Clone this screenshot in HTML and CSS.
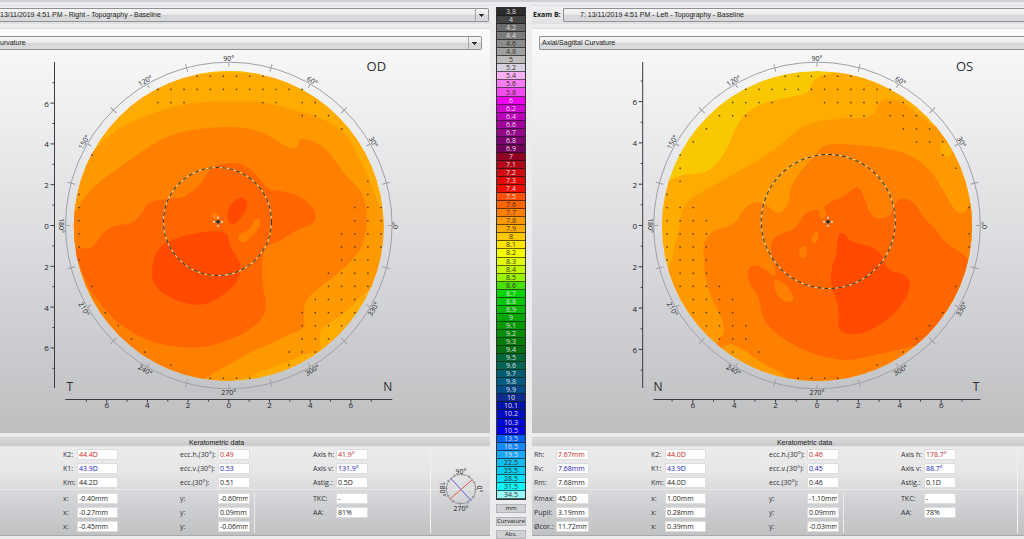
FILE: index.html
```
<!DOCTYPE html>
<html lang="en">
<head>
<meta charset="utf-8">
<title>Topography comparison</title>
<link rel="stylesheet" href="styles.css">
</head>
<body>
<main class="app">
  <section class="eye eye-right">
    <div class="exam"><select class="combo" aria-label="Exam A"><option>13/11/2019 4:51 PM - Right - Topography - Baseline</option></select></div>
    <div class="map">
      <div class="map-head"><select class="combo" aria-label="Map type, right eye"><option>urvature</option></select></div>
      <svg class="chart" id="chart-od" viewBox="0 50 490 383" role="img" aria-label="OD curvature map"></svg>
    </div>
    <div class="kerato">
      <h2 class="kerato-title">Keratometric data</h2>
      <div class="kerato-body" id="data-od"></div>
    </div>
  </section>
  <aside class="scale">
    <ol class="steps" id="steps"></ol>
    <button class="unit">mm</button>
    <button class="unit">Curvature</button>
    <button class="unit">Abs.</button>
  </aside>
  <section class="eye eye-left">
    <div class="exam"><label class="exam-label" for="exam-b">Exam B:</label><select class="combo combo-open combo-indent" id="exam-b"><option>7: 13/11/2019 4:51 PM - Left - Topography - Baseline</option></select></div>
    <div class="map">
      <div class="map-head"><select class="combo combo-open" aria-label="Map type, left eye"><option>Axial/Sagittal Curvature</option></select></div>
      <svg class="chart" id="chart-os" viewBox="532 50 492 383" role="img" aria-label="OS curvature map"></svg>
    </div>
    <div class="kerato">
      <h2 class="kerato-title">Keratometric data</h2>
      <div class="kerato-body" id="data-os"></div>
    </div>
  </section>
</main>
<script src="app.js"></script>
</body>
</html>
```
FILE: styles.css
```
* { box-sizing: border-box; }
body {
  margin: 0;
  background: #ececee;
  color: #1c1c20;
  font: 7px/10px "Open Sans", "Noto Sans", sans-serif;
  overflow: hidden;
}
.app {
  display: grid;
  grid-template-columns: minmax(0, 1fr) 40px minmax(0, 1fr);
  border-top: 2px solid #d0d0d7;
}
.eye { display: flex; flex-direction: column; gap: 4px; padding-top: 3px; min-width: 0; }
.exam {
  display: flex;
  align-items: center;
  height: 19px;
  border-top: 1px solid #dedee1;
  background: linear-gradient(#f1f1f2, #e0e0e2);
}
.eye-right { margin-right: 2px; }
.eye-right .exam { padding-right: 1px; }
.exam-label { flex: none; width: 31px; padding-left: 1px; font-weight: bold; white-space: nowrap; }
.combo {
  flex: 1;
  width: 100%;
  min-width: 0;
  height: 14px;
  margin: 0;
  padding: 0 14px 0 0;
  appearance: none;
  border: 1px solid #909195;
  border-left: 0;
  border-radius: 0 2px 2px 0;
  color: #1c1c20;
  font: 7px/10px "Liberation Sans", Arial, sans-serif;
  background:
    linear-gradient(#333, #333) right 4px top 5px / 5px 1px no-repeat,
    linear-gradient(#333, #333) right 5px top 6px / 3px 1px no-repeat,
    linear-gradient(#333, #333) right 6px top 7px / 1px 1px no-repeat,
    linear-gradient(#a5a6aa, #a5a6aa) right 12px top 0 / 1px 100% no-repeat,
    linear-gradient(#f4f4f4 0, #ebebec 45%, #d5d6d8 50%, #d9dadc 100%);
}
.combo-open {
  padding: 0 0 0 2px;
  border: 1px solid #909195;
  border-right: 0;
  border-radius: 2px 0 0 2px;
  background: linear-gradient(#f4f4f4 0, #ebebec 45%, #d5d6d8 50%, #d9dadc 100%);
}
.combo-indent { padding-left: 16px; }
.map {
  border-top: 1px solid #dcdcdf;
  background: linear-gradient(#fafafa 0, #f2f2f3 15%, #dedfe1 48%, #cdced2 75%, #c5c6c8 88%, #bdbfc1 100%);
}
.map-head { display: flex; padding-top: 7px; }
.eye-right .map-head { padding-right: 8px; }
.eye-left .map-head { padding-left: 7px; }
.chart { display: block; width: 100%; height: auto; }
.kerato {
  height: 99px;
  border-top: 1px solid #cfcfd2;
  border-bottom: 1px solid #a9aaac;
  background: linear-gradient(#dcdcde 0, #c9cacc 7px, #ececec 9px, #e6e6e7 35px, #d0d1d4 65px, #c0c1c3 100%);
}
.kerato-title { margin: 0; height: 11px; font: 7px/10px "Liberation Sans", Arial, sans-serif; text-align: center; }
.eye-right .kerato-title { padding-right: 57px; }
.eye-left .kerato-title { padding-left: 53px; }
.kerato-body { display: flex; background: linear-gradient(#e8e8ea, #e8e8ea) 0 40px / 100% 1px no-repeat; }
.eye-right .kerato-body { padding-left: 63px; }
.eye-left .kerato-body { padding-left: 2px; }
.groups { flex: 1; display: grid; }
.eye-right .groups { grid-template-columns: 117fr 133fr 117fr; }
.eye-left .groups { grid-template-columns: 117fr 118fr 132fr 116fr; }
.group { display: grid; grid-template-rows: 11px 11px 13px 11px 11px 11px; row-gap: 3px; align-content: start; }
.field { display: flex; align-items: center; height: 11px; }
.field label { flex: none; white-space: nowrap; color: #303036; }
.field input {
  min-width: 0;
  height: 11px;
  padding: 0 1px;
  border: 1px solid #dddde0;
  border-radius: 1px;
  background: #fff;
  color: #1c1c20;
  font: inherit;
}
.field .red { color: #c8241c; }
.field .blue { color: #2020c0; }
.g-r label { width: 22px; }
.g-r input { width: 33px; }
.g-k label { width: 14px; }
.g-k input { width: 41px; }
.g-e label { width: 38px; }
.g-e input { width: 32px; }
.g-e { background: linear-gradient(#ececee, #ececee) 74px 44px / 1px 40px no-repeat; }
.g-a label { width: 23px; }
.g-a input { width: 32px; }
.compass { flex: none; width: 60px; height: 84px; border-left: 1px solid #f2f2f2; }
.rest { flex: none; width: 7px; height: 84px; border-left: 1px solid #f2f2f2; }
.scale { display: flex; flex-direction: column; gap: 4px; padding: 5px 6px 0 4px; }
.steps {
  display: grid;
  grid-auto-rows: 1fr;
  height: 493px;
  margin: 0;
  padding: 0;
  list-style: none;
  border: 1px solid #333;
}
.steps li { display: flex; align-items: center; justify-content: center; min-height: 0; line-height: 7px; border-bottom: 1px solid rgba(20, 20, 20, .65); overflow: hidden; }
.unit {
  height: 9px;
  margin: 0;
  padding: 0;
  border: 1px solid #b4b5b8;
  background: #cfd0d2;
  color: #1c1c20;
  font: 6px/7px "Open Sans", "Noto Sans", sans-serif;
}
```
FILE: app.js
```
// Curvature scale
var steps = [
  ['3.8', '#2b2b2b', 1], ['4', '#444', 1], ['4.2', '#6b6b6b', 1], ['4.4', '#7b7b7b', 1], ['4.6', '#8b8b8b'], ['4.8', '#a0a0a0'],
  ['5', '#bcbcbc'], ['5.2', '#d8d0e0'], ['5.4', '#f8b0f4'], ['5.6', '#f57cf2'], ['5.8', '#f24cf0'], ['6', '#f000f0', 1],
  ['6.2', '#d000d0', 1], ['6.4', '#b800b8', 1], ['6.6', '#a0009c', 1], ['6.7', '#900a88', 1], ['6.8', '#7c0470', 1], ['6.9', '#700058', 1],
  ['7', '#900020', 1], ['7.1', '#b00818', 1], ['7.2', '#cc0c10', 1], ['7.3', '#e00808', 1], ['7.4', '#f00c00', 1], ['7.5', '#ff5000', 1],
  ['7.6', '#ff6600'], ['7.7', '#ff8000'], ['7.8', '#ff9900'], ['7.9', '#ffab00'], ['8', '#ffc800'], ['8.1', '#ffe600'],
  ['8.2', '#f4fc00'], ['8.3', '#e0fc10'], ['8.4', '#c4f800'], ['8.5', '#98f400'], ['8.6', '#48e000'], ['8.7', '#00d400', 1],
  ['8.8', '#00c800', 1], ['8.9', '#00b800', 1], ['9', '#00a800', 1], ['9.1', '#009a00', 1], ['9.2', '#008c08', 1], ['9.3', '#007c08', 1],
  ['9.4', '#007010', 1], ['9.5', '#006838', 1], ['9.6', '#006450', 1], ['9.7', '#005c70', 1], ['9.8', '#005c80', 1], ['9.9', '#004c88', 1],
  ['10', '#0c2c90', 1], ['10.1', '#0014a8', 1], ['10.2', '#000cc0', 1], ['10.3', '#0008d8', 1], ['10.5', '#0000e8', 1], ['13.5', '#0060f8', 1],
  ['16.5', '#1488fc', 1], ['19.5', '#18a8fc', 1], ['22.5', '#10bcf0'], ['25.5', '#08ccf4'], ['28.5', '#08e0f8'], ['31.5', '#10f4fc'], ['34.5', '#98f8f8']
];
document.getElementById('steps').innerHTML = steps.map(function (s) {
  return '<li style="background:' + s[1] + ';color:' + (s[2] ? '#e4dce0' : '#3a3020') + '">' + s[0] + '</li>';
}).join('');

// Closed smooth curve through the midpoints of a point list
function blob(text) {
  var p = text.split(' ').map(function (t) { return t.split(',').map(Number); });
  var mid = function (a, b) { return (a[0] + b[0]) / 2 + ' ' + (a[1] + b[1]) / 2; };
  var d = 'M' + mid(p[p.length - 1], p[0]);
  p.forEach(function (q, i) { d += 'Q' + q[0] + ' ' + q[1] + ' ' + mid(q, p[(i + 1) % p.length]); });
  return d + 'Z';
}

function chart(o) {
  var cx = o.cx, cy = 225.5, s = '', i, a, c, n;
  s += '<clipPath id="' + o.id + '-clip"><circle cx="' + cx + '" cy="226" r="155"/></clipPath><g clip-path="url(#' + o.id + '-clip)">';
  s += '<circle cx="' + cx + '" cy="226" r="155" fill="' + o.base + '"/>';
  o.layers.forEach(function (l) { s += '<path fill="' + l[0] + '" d="' + blob(l[1]) + '"/>'; });
  s += '</g><g fill="#3c3420">';
  o.dots.forEach(function (row, k) {
    row.forEach(function (r) {
      for (n = r[0]; n <= (r[1] === undefined ? r[0] : r[1]); n++) {
        s += '<rect width="1.4" height="1.4" x="' + (o.dx + n * 13.13 - .7) + '" y="' + (76.3 + k * 13.13 - .7) + '"/>';
      }
    });
  });
  s += '</g><g fill="none" stroke="#a0a1a8"><circle cx="' + cx + '" cy="' + cy + '" r="163.3"/>';
  for (i = 0; i < 24; i++) {
    s += '<path transform="rotate(' + i * 15 + ' ' + cx + ' ' + cy + ')" d="M' + (cx + 159) + ' ' + cy + 'h' + (i % 2 ? 8 : 4) + '"/>';
  }
  s += '</g><g fill="#222228" font-size="7" text-anchor="middle">';
  [[0, -90], [30, 60], [60, 30], [90, 0], [120, -30], [150, -60], [180, 90], [210, 60], [240, 30], [270, 0], [300, -30], [330, -60]].forEach(function (t) {
    a = t[0] * Math.PI / 180; c = 167;
    s += '<text transform="translate(' + (cx + c * Math.cos(a)) + ' ' + (cy - c * Math.sin(a)) + ') rotate(' + t[1] + ')" y="2.5">' + t[0] + '°</text>';
  });
  for (i = -3; i <= 3; i++) {
    s += '<text x="' + (o.ax - 8) + '" y="' + (cy + 3.5 + i * o.vs) + '" font-size="8">' + Math.abs(i * 2) + '</text>';
    s += '<text x="' + (cx + i * o.hs) + '" y="408" font-size="8">' + Math.abs(i * 2) + '</text>';
  }
  s += '</g><g stroke="#3c3c42" fill="none"><path d="M' + o.ax + ' 62V388M' + (cx - 163.5) + ' 399.5H' + (cx + 163.5) + '"/><path d="';
  for (i = -7; i <= 7; i++) {
    s += 'M' + o.ax + ' ' + (cy + i * o.vs / 2) + 'h' + (i % 2 ? -2 : -4) + 'M' + (cx + i * o.hs / 2) + ' 399.5v' + (i % 2 ? 2 : 3);
  }
  s += '"/></g><g fill="none" stroke-width="1.1"><circle cx="' + o.px + '" cy="221.5" r="' + o.pr + '" stroke="#f0cc80"/><circle cx="' + o.px + '" cy="221.5" r="' + o.pr + '" stroke="#3c3c30" stroke-dasharray="4 3"/></g>';
  s += '<path d="M' + (o.mx - 5) + ' 221.8h10M' + o.mx + ' 216.8v10" stroke="#fff0d0" stroke-width="1.4"/><path d="M' + (o.mx - 3) + ' 221.8h6M' + o.mx + ' 218.8v6" stroke="#302820" stroke-width="1"/><circle cx="' + o.mx + '" cy="221.8" r="1.7" fill="#302820"/>';
  s += '<g fill="#2e2e34" font-size="13" text-anchor="middle"><text x="' + (cx + 147.5) + '" y="71">' + o.id.toUpperCase() + '</text><text font-size="12" x="' + (cx - 159) + '" y="391">' + o.l + '</text><text font-size="12" x="' + (cx + 159) + '" y="391">' + o.r + '</text></g>';
  document.getElementById('chart-' + o.id).innerHTML = s;
}

chart({
  id: 'od', cx: 228.8, ax: 54.5, vs: 40.8, hs: 40.7, dx: 79, px: 217.5, pr: 54, mx: 218, l: 'T', r: 'N', base: '#ffab00',
  layers: [
    ['#ffc200', '190,60 190,76 210,73 245,72 262,76 262,60'],
    ['#ff9900', '60,180 84,168 92,152 104,140 120,127 150,114 185,103 228,101 265,102 290,109 320,117 346,132 356,152 368,175 377,200 385,222 396,250 386,278 366,291 345,314 322,327 319,338 322,352 306,353 288,362 262,371 240,382 60,390'],
    ['#ff8000', '60,225 76,212 82,200 95,185 110,174 130,160 150,145 175,133 210,127 240,127 262,131 280,143 292,149 299,146 298,140 305,138 322,145 335,160 346,176 361,190 367,208 367,230 361,250 345,268 318,289 306,299 303,313 306,328 290,334 270,344 250,352 225,367 205,378 180,395 60,390'],
    ['#ff6600', '60,248 85,249 94,247 102,233 114,225 132,224 142,214 148,201 170,199 186,197 201,184 211,167 226,163 241,163 255,173 264,185 270,190 290,192 309,202 317,214 313,225 297,229 282,240 264,247 262,260 262,285 267,305 263,318 250,330 232,339 208,347 180,348 150,342 122,327 102,307 87,285 76,255'],
    ['#ff4a00', '157,248 175,238 200,232 228,230 229,246 243,266 236,286 214,301 200,306 175,301 154,287 151,270'],
    ['#ff4a00', '227,218 228,208 237,198 245,197 248,206 243,215 236,224 230,224'],
    ['#ff8000', '237,237 243,232 250,230 254,220 261,218 259,229 252,235 246,243 240,242'],
    ['#ff8000', '210,213 218,213 220,220 213,219']
  ],
  dots: [
    [[9, 14]], [[6, 17]], [[6, 8], [14, 15], [17, 18]], [[17, 19]], [[20]], [], [[1]], [], [[22]], [[0], [22]], [[0], [21, 23]],
    [[0], [21, 23]], [[0], [20, 23]], [[0], [20, 23]], [[0], [20, 22]], [[19, 22]], [[1], [19, 22]], [[18, 21]], [[2], [17, 21]],
    [[3], [17, 20]], [[4], [17, 19]], [[5], [16, 18]], [[7], [16]], [[10, 13]]
  ]
});
chart({
  id: 'os', cx: 817, ax: 642.7, vs: 41.3, hs: 41.4, dx: 667, px: 828.3, pr: 67, mx: 828, l: 'N', r: 'T', base: '#f9c800',
  layers: [
    ['#ffab00', '650,195 670,180 683,174 705,174 721,160 731,140 741,116 762,103 790,97 810,93 812,81 822,75 848,71 860,50 1000,50 1000,400 640,400'],
    ['#ff9900', '650,290 670,268 674,248 680,225 682,207 694,196 720,182 750,165 775,150 790,135 810,122 840,118 874,118 878,103 890,98 905,104 922,117 932,126 950,125 1000,180 1000,400 640,400'],
    ['#ff8000', '703,255 704,240 715,229 735,225 744,207 756,201 768,205 777,215 788,207 790,188 800,171 816,155 823,144 850,144 880,147 908,153 930,169 944,191 955,212 966,214 972,195 1000,190 1000,400 790,400 790,377 760,362 745,350 728,342 718,352 717,340 725,333 722,318 712,300 706,282'],
    ['#ff6600', '771,255 771,240 780,234 796,229 802,216 814,209 823,211 825,204 845,196 858,184 865,199 870,215 880,220 892,215 895,202 904,197 916,204 924,219 936,229 944,242 966,255 978,275 1000,320 930,342 885,353 850,361 826,358 800,349 774,333 761,316 760,298 748,282 747,268 755,264 768,271 776,279 775,265'],
    ['#ff4a00', '837,236 843,231 850,242 868,245 882,253 886,270 905,274 911,282 907,298 892,317 867,333 848,335 837,329 840,309 831,288 831,268 837,255'],
    ['#ff8000', '799,248 806,245 808,254 803,259 799,255'], ['#ff8000', '814,233 818,231 819,238 815,244 811,241'],
    ['#ff8000', '774,278 786,284 795,298 791,303 780,299 774,289'], ['#ff8000', '818,208 826,208 826,218 820,219'],
    ['#ffab00', '940,140 952,145 952,158 940,154']
  ],
  dots: [
    [[9, 14]], [[6, 17]], [[5, 8], [12, 18]], [[4, 6], [14, 15], [17, 19]], [[3], [18, 20]], [[2], [19, 21]], [[1], [21]], [[1], [22]], [[1]], [[0]],
    [[0, 2], [23]], [[0, 3]], [[0, 3], [23]], [[0, 3], [23]], [[0, 3]], [[1, 3]], [[1, 4], [22]], [[2, 5]], [[2, 5], [21]],
    [[3, 6], [20]], [[4, 6], [19]], [[5], [7], [18]], [[16]], [[10, 13]]
  ]
});

// Keratometric values, one column per group
function groups(id, list) {
  return '<div class="groups">' + list.map(function (g, gi) {
    return '<div class="group ' + g[0] + '">' + g[1].map(function (f, i) {
      var key = id + gi + i;
      return '<div class="field"><label for="' + key + '">' + f[0] + '</label><input id="' + key + '" class="' + (['red', 'blue'][i] || 'plain') + '" value="' + f[1] + '" readonly></div>';
    }).join('') + '</div>';
  }).join('') + '</div>';
}
document.getElementById('data-od').innerHTML = groups('od', [
  ['g-k', [['K2:', '44.4D'], ['K1:', '43.9D'], ['Km:', '44.2D'], ['x:', '-0.40mm'], ['x:', '-0.27mm'], ['x:', '-0.45mm']]],
  ['g-e', [['ecc.h.(30°):', '0.49'], ['ecc.v.(30°):', '0.53'], ['ecc.(30°):', '0.51'], ['y:', '-0.60mm'], ['y:', '0.09mm'], ['y:', '-0.06mm']]],
  ['g-a', [['Axis h:', '41.9°'], ['Axis v:', '131.9°'], ['Astig.:', '0.5D'], ['TKC:', '-'], ['AA:', '81%']]]
]) + '<svg class="compass" viewBox="430 449 60 84"><g fill="none" stroke="#909096"><circle cx="460.5" cy="489" r="15"/><circle cx="460.5" cy="489" r="15" stroke-width="3" stroke-dasharray="1 6.85"/></g>' +
  '<path d="M450 478l21 23" stroke="#5c5ce0"/><path d="M449 499.500l23-20" stroke="#e05848"/><g font-size="7" text-anchor="middle" fill="#222228"><text x="460.500" y="474">90°</text><text x="460.500" y="511">270°</text><text transform="translate(439 489) rotate(90)">180°</text><text transform="translate(477 489) rotate(90)">0°</text></g></svg>';
document.getElementById('data-os').innerHTML = groups('os', [
  ['g-r', [['Rh:', '7.67mm'], ['Rv:', '7.68mm'], ['Rm:', '7.68mm'], ['Kmax:', '45.0D'], ['Pupil:', '3.19mm'], ['Øcor.:', '11.72mm']]],
  ['g-k', [['K2:', '44.0D'], ['K1:', '43.9D'], ['Km:', '44.0D'], ['x:', '1.00mm'], ['x:', '0.28mm'], ['x:', '0.39mm']]],
  ['g-e', [['ecc.h.(30°):', '0.46'], ['ecc.v.(30°):', '0.45'], ['ecc.(30°):', '0.46'], ['y:', '-1.10mm'], ['y:', '0.09mm'], ['y:', '-0.03mm']]],
  ['g-a', [['Axis h:', '178.7°'], ['Axis v:', '88.7°'], ['Astig.:', '0.1D'], ['TKC:', '-'], ['AA:', '78%']]]
]) + '<div class="rest"></div>';
```
